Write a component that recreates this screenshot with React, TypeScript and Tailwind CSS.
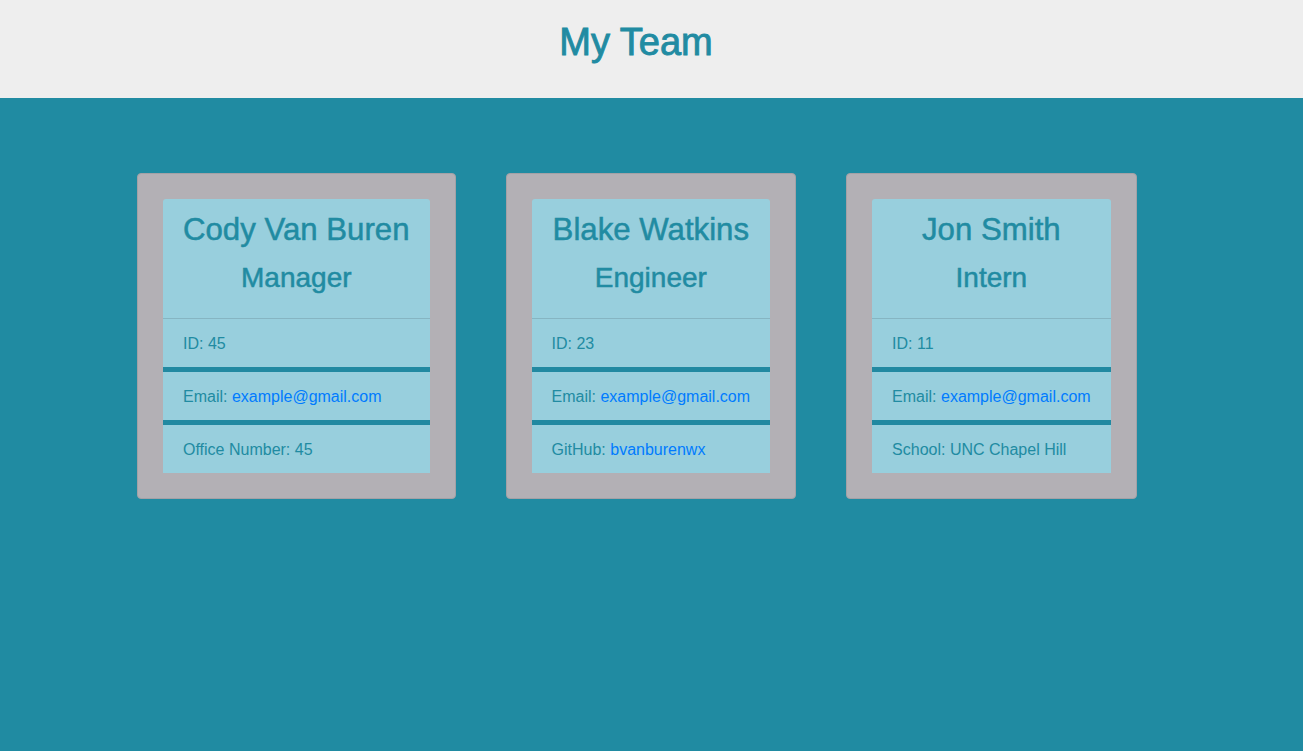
import React from 'react';

interface Member {
  name: string;
  role: string;
  id: number;
  email: string;
  extraLabel: string;
  extraValue: string;
  extraLink?: boolean;
}

const team: Member[] = [
  { name: 'Cody Van Buren', role: 'Manager', id: 45, email: 'example@gmail.com', extraLabel: 'Office Number', extraValue: '45' },
  { name: 'Blake Watkins', role: 'Engineer', id: 23, email: 'example@gmail.com', extraLabel: 'GitHub', extraValue: 'bvanburenwx', extraLink: true },
  { name: 'Jon Smith', role: 'Intern', id: 11, email: 'example@gmail.com', extraLabel: 'School', extraValue: 'UNC Chapel Hill' },
];

function TeamCard({ member }: { member: Member }) {
  return (
    <div className="bg-[#b3b0b5] border border-[#a3a1a6] rounded-[4px] p-[25px]">
      <div className="bg-[#98cfdd] rounded-t-[3px]">
        <div className="text-center px-5 pt-[12px] pb-[23px] border-b border-[#86b5c2] [-webkit-text-stroke:0.5px_currentColor]">
          <h2 className="text-[31.2px] leading-[38px] whitespace-nowrap">{member.name}</h2>
          <h3 className="text-[28px] leading-[34px] mt-[12px]">{member.role}</h3>
        </div>
        <div className="px-5 pt-[13px] pb-[11px] text-[16px] leading-[24px]">ID: {member.id}</div>
        <div className="px-5 pt-[13px] pb-[11px] text-[16px] leading-[24px] border-t-[5px] border-[#2189a1] whitespace-nowrap">
          Email: <a href="#" className="text-[#007bff]">{member.email}</a>
        </div>
        <div className="px-5 pt-[13px] pb-[11px] text-[16px] leading-[24px] border-t-[5px] border-[#2189a1] whitespace-nowrap">
          {member.extraLabel}:{' '}
          {member.extraLink ? (
            <a href="#" className="text-[#007bff]">{member.extraValue}</a>
          ) : (
            member.extraValue
          )}
        </div>
      </div>
    </div>
  );
}

export default function App() {
  return (
    <div className="min-h-[751px] bg-[#208ba2] text-[#218ba2] font-['Liberation_Sans',Arial,sans-serif]">
      <header className="bg-[#eeeeee] h-[98px] flex items-center justify-center pb-[14px] pr-[31px]">
        <h1 className="text-[38px] leading-[46px] [-webkit-text-stroke:0.9px_currentColor]">My Team</h1>
      </header>
      <main className="flex items-start gap-[50px] pl-[137px] pt-[75px]">
        {team.map((m) => (
          <TeamCard key={m.name} member={m} />
        ))}
      </main>
    </div>
  );
}
